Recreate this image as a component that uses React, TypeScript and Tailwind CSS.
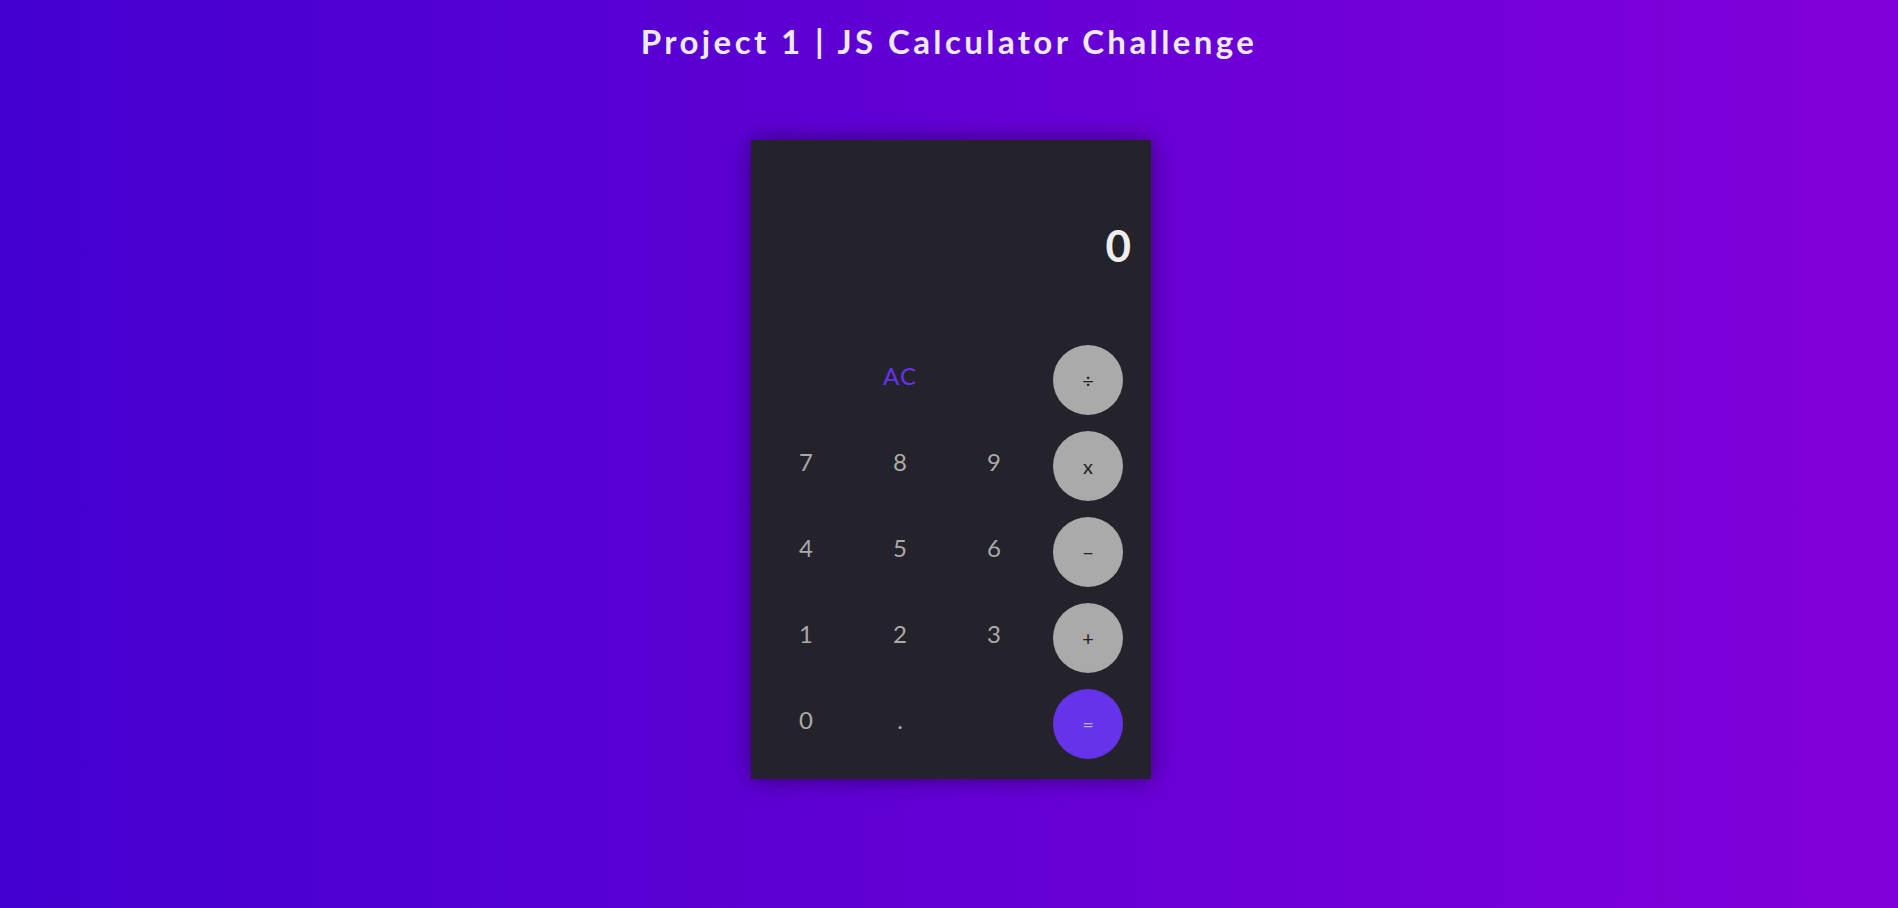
import React from 'react';

type Key = { label: string; kind: 'num' | 'op' | 'eq' | 'clear' | 'blank' };

const keys: Key[] = [
  { label: '', kind: 'blank' },
  { label: 'AC', kind: 'clear' },
  { label: '', kind: 'blank' },
  { label: '÷', kind: 'op' },
  { label: '7', kind: 'num' },
  { label: '8', kind: 'num' },
  { label: '9', kind: 'num' },
  { label: 'x', kind: 'op' },
  { label: '4', kind: 'num' },
  { label: '5', kind: 'num' },
  { label: '6', kind: 'num' },
  { label: '−', kind: 'op' },
  { label: '1', kind: 'num' },
  { label: '2', kind: 'num' },
  { label: '3', kind: 'num' },
  { label: '+', kind: 'op' },
  { label: '0', kind: 'num' },
  { label: '.', kind: 'num' },
  { label: '', kind: 'blank' },
  { label: '=', kind: 'eq' },
];

const CalcKey: React.FC<{ k: Key }> = ({ k }) => {
  if (k.kind === 'blank') return <div className="h-[70px]" />;
  if (k.kind === 'op')
    return (
      <div className="flex h-[70px] items-center justify-center">
        <button className="flex h-[70px] w-[70px] items-center justify-center rounded-full bg-[#aaaaaa] text-xl text-[#222222]">
          {k.label}
        </button>
      </div>
    );
  if (k.kind === 'eq')
    return (
      <div className="flex h-[70px] items-center justify-center">
        <button className="flex h-[70px] w-[70px] items-center justify-center rounded-full bg-[#6633ea] text-xl text-[#b5b5b5]">
          {k.label}
        </button>
      </div>
    );
  return (
    <button
      className={
        k.kind === 'clear'
          ? 'flex h-[70px] items-center justify-center pb-[7px] text-2xl tracking-wider text-[#6633ea]'
          : 'flex h-[70px] items-center justify-center pb-[7px] text-2xl text-[#aaaaaa]'
      }
    >
      {k.label}
    </button>
  );
};

export default function App() {
  return (
    <div
      className="flex min-h-[908px] flex-col items-center bg-[linear-gradient(to_right,#4300d0,#8200da)]"
      style={{ fontFamily: 'Lato, "Noto Sans", sans-serif' }}
    >
      <h1 className="mt-[22px] text-[33px] leading-[1.2] font-bold tracking-[3.4px] text-[#eeeaf4]">
        Project 1 | JS Calculator Challenge
      </h1>

      <div className="mt-[78px] ml-[4px] flex h-[639px] w-[400px] flex-col bg-[#24222b] shadow-[0_0_22px_rgba(0,0,0,0.45)]">
        <div className="flex h-[205px] items-center justify-end pr-[20px] pt-[5px]">
          <span className="text-[44px] font-bold text-[#eeeeee]">0</span>
        </div>
        <div className="grid grid-cols-[repeat(4,94px)] gap-y-4 pl-2">
          {keys.map((k, i) => (
            <CalcKey key={i} k={k} />
          ))}
        </div>
      </div>
    </div>
  );
}
